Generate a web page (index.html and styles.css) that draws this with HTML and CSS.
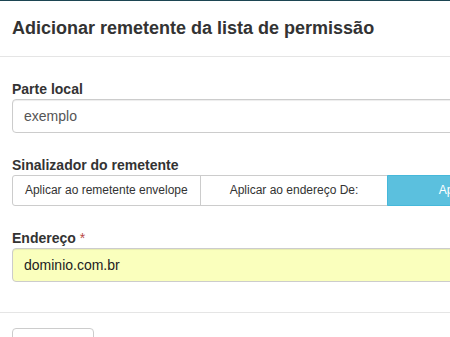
FILE: index.html
```html
<!DOCTYPE html>
<html lang="pt-BR">
<head>
<meta charset="utf-8">
<title>Adicionar remetente</title>
<link rel="stylesheet" href="styles.css">
</head>
<body>
<div class="modal">
  <div class="modal-header">
    <h4 class="modal-title">Adicionar remetente da lista de permissão</h4>
  </div>
  <div class="modal-body">
    <div class="form-group">
      <label class="control-label">Parte local</label>
      <input class="form-control" type="text" value="exemplo">
    </div>
    <div class="form-group">
      <label class="control-label">Sinalizador do remetente</label>
      <div class="btn-group">
        <button class="btn">Aplicar ao remetente envelope</button>
        <button class="btn">Aplicar ao endereço De:</button>
        <button class="btn active">Aplicar a ambos</button>
      </div>
    </div>
    <div class="form-group">
      <label class="control-label">Endereço <span class="req">*</span></label>
      <input class="form-control autofill" type="text" value="dominio.com.br">
    </div>
  </div>
  <div class="modal-footer">
    <button class="btn btn-default">Cancelar</button>
  </div>
</div>
</body>
</html>
```

FILE: styles.css
```css
html, body {
  margin: 0;
  padding: 0;
  background: #fff;
  overflow: hidden;
}
body {
  font-family: "Liberation Sans", Arial, sans-serif;
  font-size: 14px;
  color: #333;
}
.modal {
  width: 588px;
  border-top: 1px solid #1c4552;
}
.modal-header {
  padding: 14px 12px 15px;
  border-bottom: 1px solid #e5e5e5;
}
.modal-title {
  margin: 0;
  font-size: 18px;
  line-height: 26px;
  font-weight: bold;
  color: #333;
}
.modal-body {
  padding: 22px 12px 8px;
}
.form-group {
  margin-bottom: 22px;
}
.control-label {
  display: block;
  font-weight: bold;
  font-size: 14px;
  line-height: 20px;
  color: #333;
}
.req {
  color: #b94a48;
  font-weight: normal;
}
.form-control {
  display: block;
  box-sizing: border-box;
  width: 100%;
  height: 34px;
  margin: 0;
  padding: 6px 12px 6px 11px;
  font-family: "Liberation Sans", Arial, sans-serif;
  font-size: 14px;
  line-height: 20px;
  color: #555;
  background: #fff;
  border: 1px solid #ccc;
  border-radius: 4px;
  box-shadow: inset 0 1px 1px rgba(0,0,0,0.075);
  outline: none;
}
.form-control.autofill {
  background: #faffbd;
  color: #222;
}
.btn-group {
  display: flex;
  width: 100%;
}
.btn-group .btn {
  flex: 1 1 0;
  box-sizing: border-box;
  margin: 0 0 0 -1px;
  padding: 5px 10px;
  font-family: "Liberation Sans", Arial, sans-serif;
  font-size: 12px;
  line-height: 19px;
  color: #333;
  background: #fff;
  border: 1px solid #ccc;
  border-radius: 0;
  white-space: nowrap;
}
.btn-group .btn:first-child {
  margin-left: 0;
  border-radius: 3px 0 0 3px;
}
.btn-group .btn:last-child {
  border-radius: 0 3px 3px 0;
}
.btn-group .btn.active {
  background: #5bc0de;
  border-color: #46b8da;
  color: #fff;
  position: relative;
}
.modal-footer {
  padding: 15px 12px;
  border-top: 1px solid #e5e5e5;
}
.btn-default {
  box-sizing: border-box;
  height: 34px;
  padding: 6px 12px;
  font-family: "Liberation Sans", Arial, sans-serif;
  font-size: 14px;
  line-height: 20px;
  color: #333;
  background: #fff;
  border: 1px solid #ccc;
  border-radius: 4px;
}
```
